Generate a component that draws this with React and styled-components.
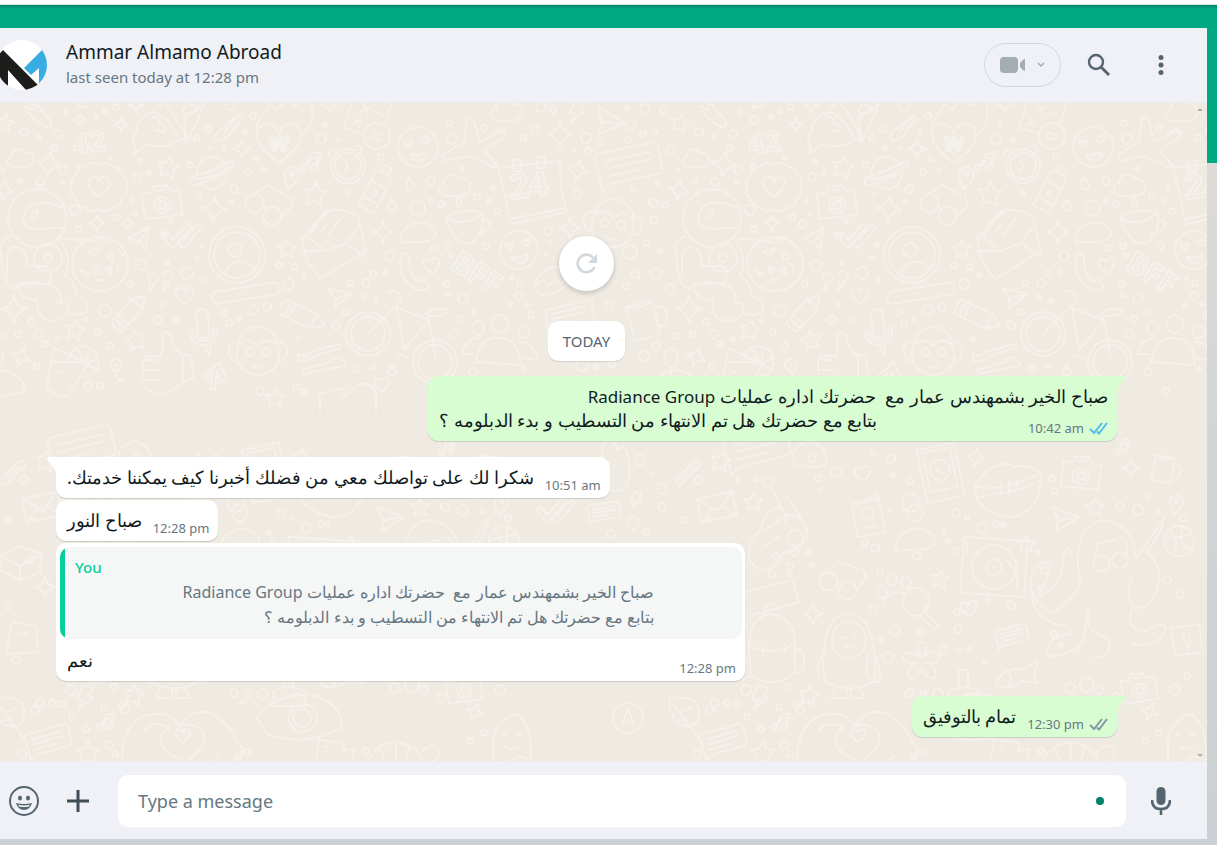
import styled, { createGlobalStyle, css } from "styled-components";

const GlobalStyle = createGlobalStyle`
    *, *::before, *::after {
        box-sizing: border-box;
    }

    body {
        margin: 0;
        color: #111b21;
        font-family: "Noto Sans", "Open Sans", sans-serif;
    }

    button, input {
        font: inherit;
    }
`;

const messages = [
    {
        id: 1,
        sent: true,
        tail: true,
        wide: true,
        lines: [{ text: "صباح الخير بشمهندس عمار مع  حضرتك اداره عمليات", latin: "Radiance Group" }],
        last: "بتابع مع حضرتك هل تم الانتهاء من التسطيب و بدء الدبلومه ؟",
        time: "10:42 am",
        status: "read",
        gap: 16,
    },
    {
        id: 2,
        tail: true,
        last: "شكرا لك على تواصلك معي من فضلك أخبرنا كيف يمكننا خدمتك.",
        time: "10:51 am",
        gap: 2,
    },
    { id: 3, last: "صباح النور", time: "12:28 pm", gap: 2 },
    {
        id: 4,
        wide: true,
        quote: {
            author: "You",
            lines: [
                { text: "صباح الخير بشمهندس عمار مع  حضرتك اداره عمليات", latin: "Radiance Group" },
                { text: "بتابع مع حضرتك هل تم الانتهاء من التسطيب و بدء الدبلومه ؟" },
            ],
        },
        last: "نعم",
        time: "12:28 pm",
        gap: 15,
    },
    { id: 5, sent: true, tail: true, last: "تمام بالتوفيق", time: "12:30 pm", status: "delivered", gap: 0 },
];

// Wallpaper doodles, one tile is 675px wide
const TILE = 675;

const star = "M0-10L3-3.6L10-3L5 2.2L6.4 9.4L0 6L-6.4 9.4L-5 2.2L-10-3L-3-3.6Z";
const sparkle = "M0-10Q1.5-1.5 10 0Q1.5 1.5 0 10Q-1.5 1.5-10 0Q-1.5-1.5 0-10Z";
const heart = "M0 8C-5 4-10 0-9-5C-7-10-1-9 0-4C1-9 7-10 9-5C10 0 5 4 0 8Z";
const bolt = "M-3-10L6-10L2-2L7-2L-4 11L-1 2L-7 2Z";
const camera = "M-19-11H-10L-7-17H7L10-11H19V14H-19ZM-8 2a8 8 0 1 0 16 0a8 8 0 1 0-16 0M-4 2a4 4 0 1 0 8 0a4 4 0 1 0-8 0M-4-13H4";
const cloud = "M-9 8C-16 6-14-2-9-2C-10-10 1-12 4-6C12-8 16 2 10 6C7 9-4 9-9 8Z";
const note = "M-6 8a3 3 0 1 1-1-3L-3-8L6-11L5 5a3 3 0 1 1-2-3L4-5L-3-3Z";
const pin = "M0 12C-3 6-8 2-7-4A7 7 0 0 1 7-4C8 2 3 6 0 12ZM-2-4a2 2 0 1 0 4 0a2 2 0 1 0-4 0";
const pencil = "M-22-8H12L24 0L12 8H-22Q-26 0-22-8ZM-17-8V8M-12-8V8M12-8V8";
const bubble = "M-30-12Q-30-17-25-17H30Q34-17 34-13V10Q34 15 30 15H-22L-30 22L-29 12ZM-20-8H24M-20-1H24M-20 7H10";
const letter = "M-18-12H18V12H-18ZM-18-12L0 4L18-12M-18 12L-5 0M18 12L5 0";
const openLetter = "M-33 18L-38-4L-14-32Q4-36 18-26L26 8L-20 36ZM-38 8L-14 8L6 0L26 14M-14 8L-32-6L-20-24L-10-32M6 0L18-16M-20-10L-14-18M-12-8L0-24";
const glasses = "M-22 5a10 10 0 1 0 20 0a10 10 0 1 0-20 0M2 5a10 10 0 1 0 20 0a10 10 0 1 0-20 0M-2 3Q0 0 2 3M-20 0L-12-20L12-22M21 0L24-18L16-24";
const plane = "M-13-6L11-10L0 10L-3 1Z M-3 1L11-10";
const tick = "M-16 1L-11-3L-4 4L8-16L12-13L-3 12ZM1 5L4 0L6 2L17-16L21-13L7 11Z";
const mug = "M-14-14H10V18H-14ZM-14-14Q-2-8 10-14M10-8Q22-8 20 4Q18 12 10 10";
const monkey =
    "M-20-3A20 20 0 0 1 20-3Q24 12 14 20Q0 30-14 20Q-24 12-20-3ZM-18-6Q-9-14 0-4Q9-14 18-6M-12 2a4 4 0 1 0 8 0a4 4 0 1 0-8 0M4 2a4 4 0 1 0 8 0a4 4 0 1 0-8 0M-6 15Q0 20 6 15M-22-8Q-32-6-28 6Q-26 12-20 10M22-8Q32-6 28 6Q26 12 20 10";
const smiley =
    "M-19 0a19 19 0 1 0 38 0a19 19 0 1 0-38 0M-9-1C-16-6-12-9-9-5C-5-10-2-6-9-1ZM8-3C1-8 5-12 8-8C12-12 15-8 8-3ZM-8 6Q0 9 8 5Q7 13 1 13Q-6 13-8 6Z";
const person = "M-7-22a7 8 0 1 0 14 0a7 8 0 1 0-14 0M-17 13C-20-12 18-14 18 6Q10 13 0 12T-17 13Z";

const doodles = [
    [star, 5, 123, 0.9, 10], [star, 83, 101, 0.8, 0], [star, 168, 167, 1.1, 10], [star, 315, 194, 1.2, 5],
    [star, 287, 249, 0.9, 0], [star, 75, 330, 1, 10], [star, 136, 340, 1, -10], [star, 46, 461, 1, 10],
    [star, 78, 502, 0.9, 0], [star, 265, 579, 0.9, 10], [star, 351, 544, 0.9, 0], [star, 420, 507, 0.9, 0],
    [star, 134, 695, 1, 10], [star, 88, 753, 1.2, 0], [star, 275, 398, 0.9, 0],
    [sparkle, 49, 164, 1.3, 10], [sparkle, 4, 190, 1, 10], [sparkle, 97, 223, 0.8, 0], [sparkle, 121, 125, 0.7, 0],
    [sparkle, 242, 149, 0.9, 0], [sparkle, 214, 209, 1.3, 5], [sparkle, 14, 309, 1.3, 0], [sparkle, 383, 232, 1.1, 0],
    [sparkle, 560, 134, 1.3, 0], [sparkle, 578, 170, 1.1, 10], [sparkle, 570, 228, 1.1, 0], [sparkle, 330, 104, 0.9, 0],
    [sparkle, 21, 357, 1, 20], [sparkle, 301, 457, 0.9, 10], [sparkle, 456, 468, 0.9, 0], [sparkle, 138, 614, 1, 0],
    [sparkle, 475, 712, 0.9, 20], [sparkle, 45, 587, 1, 0], [sparkle, 136, 105, 0.8, 0],
    [heart, 99, 187, 1.2, 0], [heart, 185, 296, 1, 0], [heart, 432, 266, 0.9, -10], [heart, 188, 474, 0.9, -10],
    [heart, 294, 609, 0.9, -10], [heart, 183, 736, 0.8, 0], [heart, 382, 385, 0.8, 0], [heart, 279, 144, 2.4, 0],
    [bolt, 577, 112, 1, 10], [bolt, 636, 500, 0.8, 10], [bolt, 85, 698, 1.2, 10],
    [camera, 162, 203, 1, -6], [camera, 406, 474, 1, 6], [camera, 464, 689, 0.9, -8],
    [cloud, 21, 159, 1, 0], [cloud, 507, 111, 1.2, 0], [cloud, 455, 186, 1.2, 0], [cloud, 190, 109, 0.5, 0],
    [note, 313, 162, 1, 10], [note, 449, 447, 0.8, 0], [note, 108, 722, 0.9, 10],
    [pin, 291, 178, 1, 10], [pin, 501, 505, 0.9, 10],
    [pencil, 130, 312, 0.9, -48], [pencil, 303, 316, 1, 25],
    [bubble, 627, 165, 1, -12], [bubble, 80, 448, 1, -14], [bubble, 47, 741, 0.7, -16], [bubble, 336, 636, 0.5, -14],
    [bubble, 603, 512, 0.5, -8],
    [letter, 42, 507, 1, -12], [openLetter, 340, 243, 1, 0],
    [glasses, 266, 206, 0.9, 35], [glasses, 165, 582, 0.9, 25], [glasses, 435, 558, 0.8, -10],
    [plane, 142, 240, 1, -20], [plane, 606, 124, 1.3, 40], [plane, 338, 299, 1, 20], [plane, 387, 521, 1.2, 30],
    [tick, 178, 237, 1, 10], [tick, 552, 512, 1, 10],
    [mug, 645, 318, 1.1, -14], [mug, 490, 468, 0.8, 10],
    [monkey, 613, 222, 1, 6], [monkey, 258, 350, 1, 0],
    [smiley, 418, 147, 1.05, -6], [smiley, 519, 250, 1, -6],
    [person, 418, 230, 1, 0], [person, 240, 537, 1.1, 0],
    // mitten, cookie and badge
    ["M-12-12Q-6-14 0-6L12 8Q16 16 8 15Q0 12-12-2M-14-6L-4-2M-10-12L-3-6", 38, 112, 1, 0],
    ["M-27 0Q-30-8-23-12Q-22-20-14-20Q-8-27 0-22Q8-27 14-20Q22-20 23-12Q30-8 27 0Q30 8 23 12Q22 20 14 20Q8 27 0 22Q-8 27-14 20Q-22 20-23 12Q-30 8-27 0Z", 99, 187, 1, 0],
    ["M-28 0a28 27 0 1 0 56 0a28 27 0 1 0-56 0M-12-12L0-16L-5-8ZM-20 6L-14 12L-10 10ZM-7 2l6 2l-3 6zM5 5l6-2l0 8zM12-2l6 4l0 6M-4 16h8M-3-27l10 4M20-12l4 4M8-10h5v5h-5z", 100, 264, 1, 0],
    // rocket
    ["M-26 28C-20 14-34 18-22 4C-26-2-20-6-12-12L-4-14C10-6 16 4 20 14C10 20-2 22-12 18ZM-8-8Q-2-12 0-2Q8-2 4 6L-4 4M-6-18L4-24Q18-8 26 12L20 14M4-24L18-42M24-8L44-22Q34 4 26 16Z", 160, 126, 1, 0],
    ["M-12 6Q-16 12-10 14Q-6 14 0 8L12-8Q10-12 6-10ZM-4 4L10-12M0 8L8-4", 229, 127, 1, 0],
    ["M-22 0C-24-14-12-18-10-28L-2-22L8-34L16-26L30-34Q40-14 24 2", 279, 132, 1, 0],
    // planet
    ["M-15 2A15 15 0 0 1 13-8M-12 10A15 15 0 0 0 15 2M-22 10C-24 2-12 4 16-10C26-16 22-4 8 2C-10 10-22 16-22 10ZM-16 6Q0 6 16-6", 212, 173, 1, 0],
    // clock and calculator
    ["M-17 0a17 17 0 1 0 34 0a17 17 0 1 0-34 0M-13 0a13 13 0 1 0 26 0a13 13 0 1 0-26 0M-3-6L0 0L-3 6M-19-10Q-20-16-12-16M8-20Q14-22 14-15", 348, 166, 1, 0],
    ["M-19-22H19V0M-19-22V16H0M-8-12l8 8m0-8l-8 8M6-8h9M-12 4l7 7m0-7l-7 7M2 14a13 13 0 1 0 26 0a13 13 0 1 0-26 0M10 12h9M10 17h9", 367, 118, 1, 18],
    ["M-9-14Q0-20 9-14V24H-9ZM-9-4H9M-9 14H9M-4-18V-24H4V-18M0 2Q4 7 0 9Q-4 7 0 2", 377, 188, 1, 28],
    ["M0-6Q8 4 0 6Q-8 4 0-6Z", 392, 205, 1, 0], ["M0-6Q8 4 0 6Q-8 4 0-6Z", 410, 184, 1, -10], ["M0-6Q6 4 0 6Q-6 4 0-6Z", 459, 201, 0.9, 0],
    // astronaut
    ["M-29 0a29 29 0 1 0 58 0a29 29 0 1 0-58 0M-13 4C-16-16 4-20 26-10M26 10C14 8-12 16-13 4M-6 0Q-4-8 0-8Q2-6-3 2ZM-26 18Q-40 22-36 36Q-34 64-28 68Q-20 74-18 66M-30 60V38Q-28 26-18 30Q-10 32-10 48H10Q18 54 12 66H-18Q-18 82 0 82Q0 104 18 103Q36 98 30 86Q24 84 20 84M24 24Q36 40 28 58Q38 62 40 78Q54 80 50 94Q42 98 32 96M24 20L62 24M-3 40a14 14 0 1 0 28 0a14 14 0 1 0-28 0M7 40a4 4 0 1 0 8 0a4 4 0 1 0-8 0M-18 66Q24 60 24 82V86", 37, 218, 1, 0],
    ["M-28 0a28 28 0 1 0 56 0a28 28 0 1 0-56 0M-23 0a23 23 0 1 0 46 0a23 23 0 1 0-46 0M-9-5a7 7 0 1 0 14 0a7 7 0 1 0-14 0M-12 18Q0-2 18 13", 237, 255, 1, 0],
    ["M-4-3a5 5 0 1 1 5 5Q2 8-4 10Q0 4-3 1M11-5a5 5 0 1 1 5 5Q18 6 11 9Q15 3 12 0", 152, 281, 1, 0],
    ["M-29-6H29Q34-6 34 0T29 6H-29Q-34 6-34 0T-29-6ZM-25 0h1M-17 0h1M-9 0h1M-1 0h1", 246, 293, 1, -9],
    // microphone
    ["M-6-10Q-6-17 0-17T6-10V6Q6 12 0 12T-6 6ZM-14 4Q-12 20 1 19Q14 18 14 2M-11 4Q-8 15 1 15Q10 14 11 2M-1 19L4 30L6 20", 203, 326, 1, -4],
    // thumb
    ["M-24 12V0Q-24-6-18-6H-6Q-2-22-6-26Q-2-34 4-26Q6-12 16-6V20L6 28Q-10 36-18 28Q-26 24-22 20M-22-2H-10M-24 8H-8M-24 18H-8M16-8L24-6L26 16L18 20", 167, 362, 1, 0],
    ["M-14 0L2-14L10 4L4 5L0-4L-2 14L-7 13L-4-4L-10 3Z", 217, 376, 1, 0],
    ["M-22 2Q-14 6-10 0L20-8L21-4L-6 4Q-14 12-22 8ZM-18 18L10 10Q14 2 22 8Q28 12 22 14L-16 22Z", 320, 352, 1, 0],
    // drink and hand
    ["M-10-24L24-8L4 24Q-4 26-18 16ZM-14-10H20M5-8a15 15 0 1 1 17 12M10-14L22-8L14-22M22-8L24-22M22-8L34-14M22-8L34-2M-6 0h2M2 0h1M-4 8h1", 64, 372, 1, 0],
    ["M0-6a6 6 0 1 0 .1 0M-1 0h2M0 6L3 16L-1 18M3 16L8 14", 116, 365, 1, 0],
    // bike
    ["M-22 0a22 22 0 1 0 44 0a22 22 0 1 0-44 0M-17 0a17 17 0 1 0 34 0a17 17 0 1 0-34 0M45 28a22 22 0 1 0 44 0a22 22 0 1 0-44 0M50 28a17 17 0 1 0 34 0a17 17 0 1 0-34 0M0 0L34-34Q30-46 20-42M29-26L61-14L36 16ZM61-14L68 26M58-20Q66-28 80-24Q80-18 60-18M30 20L40 24", 368, 334, 1, 0],
    // airplane
    ["M-3-28Q2-30 4-24L10-4L28-14Q38-16 34-8L14 4L28 20Q22 24 18 18L-2 10L-20 14Q-30 16-26 8L-6-4ZM26-14L30-18L36-14", 470, 146, 1, 0],
    ["M-31-20L31-27L32 2L38 24L-18 36L-24 8ZM-24 8L-8 6M-18 31L36 20M-16-28h8v11h-8zM8-31h8v11h-8z", 529, 188, 1, 0],
    ["M-20-8Q0-18 18-12Q20 10 6 18Q-10 22-20-8ZM-20-8Q-4 4 18-12M18-4Q28-6 24 2Q18 10 12 8", 465, 225, 1, 0],
    ["M-9-18L-2-16L-2-6Q0 6 6 10L14 8L18 16Q8 24-4 12Q-14 0-9-18Z", 411, 271, 1, 0],
    ["M-18 8Q-18-8 0-12Q12-14 14-4Q14 8-8 14Q-16 14-18 8ZM-16 4L-10 0L-6 5L0 0L6 3L14-4", 555, 280, 1.1, 0],
    ["M-24-10L22-20L26 20L-22 24ZM-18-6L16-14M-18-1L16-8M-16 4L0 1V14L-15 16Z", 570, 320, 1, 0],
    ["M-28-12a6 7 0 1 0 12 0a6 7 0 1 0-12 0M-8-16a8 9 0 1 0 16 0a8 9 0 1 0-16 0M18-8a6 6 0 1 0 12 0a6 6 0 1 0-12 0M-24 22Q-20-4 0-2T20 25ZM-38 14Q-34-2-20-2M-38 14L-26 14M20 2Q32 0 38 20L22 18", 500, 340, 1, 0],
    // phone with a logo
    ["M-19-24H19V30H-19ZM-14-20H14V20H-14ZM-10 0a10 10 0 1 0 20 0a10 10 0 1 0-20 0M-4-3Q-1 4 4 4M-1 25h2", 265, 470, 1, -12],
    // lips
    ["M-34 2Q-24-18-8-20Q-2-24 4-18Q20-22 32-12L30 8Q20 34-4 32Q-26 26-32 14ZM-32 2Q-8 8 32-12M-30 12L-8 8Q12 6 30-4M-8-2v10M0-4v14M8-6v10", 334, 485, 1, 0],
    ["M-14-14H14V20H-14ZM-14-9L12-20V-14M-6-2a6 6 0 1 0 12 0a6 6 0 1 0-12 0M-6 12H6", 193, 515, 1, -10],
    // record player
    ["M-32-28H32V28H-32ZM-22 0a22 22 0 1 0 44 0a22 22 0 1 0-44 0M-8 0a8 8 0 1 0 16 0a8 8 0 1 0-16 0M-1 0h2M12-8L24 6V20M-28-22v10", 319, 567, 1, 4],
    ["M-15 0a15 15 0 1 0 30 0a15 15 0 1 0-30 0M-10-11Q2 0-6 14M4-14Q-2 4 12 9M-15 0Q0-6 14-6", 504, 541, 1, 0],
    // octopus
    ["M-34-6Q-36-48-8-52Q20-50 24-14L44-42L52-54Q50-38 34-20Q56-4 42 24Q34 38 22 36Q12 24 20 6M-34-6Q-26 16-46 30L-60 42Q-86 26-80 0Q-70-14-60-8Q-66 8-72 24Q-50 18-48-18Q-44-30-40-16M-80 20Q-80 50-46 54L-40 62Q-62 62-66 80Q-60 90-40 78Q-24 70-28 60Q-24 50-24 34M-24 34Q-30 60-4 66Q2 84-18 86M20 36Q12 56 32 60Q50 48 54 56Q48 76 20 72", 437, 572, 1, 0],
    // bee
    ["M-30 32Q-28 8-6 4Q4-10 16-6Q30 0 28 16Q18 32 4 30Q0 46-14 48Q-30 46-30 32ZM-18 6Q-12-14 0-14Q10-10 6 2M2-14Q-6-34-10-36M22-4Q14-20 4-28M-14 24L0 14M8 16a8 8 0 1 0 16 0a8 8 0 1 0-16 0", 104, 522, 1, 0],
    ["M-20 4a5 6 0 1 0 10 0a5 6 0 1 0-10 0M-10-8a5 6 0 1 0 10 0a5 6 0 1 0-10 0M4-6a5 6 0 1 0 10 0a5 6 0 1 0-10 0M-14 14Q-6 0 8 6M6 14a13 14 0 1 0 26 0a13 14 0 1 0-26 0M28 24L42 38L38 42L24 28", 222, 588, 1, 0],
    // backpack
    ["M-26 0Q-26-28-6-32Q18-30 20-4V26Q0 44-24 30ZM-26 0Q0 12 20-4M-30-54L18-66L24-44L-26-30M-12-32Q-6-50 4-36M-28 14Q-36 18-32 34L-24 30M20 4Q32 0 28 26L20 26M-12 0v8M10-2v8", 100, 646, 1, 0],
    // penguin
    ["M-24 30Q-30-8-16-32Q0-46 16-30Q28-12 26 28Q4 44-24 30ZM-17-12a17 18 0 1 0 34 0a17 18 0 1 0-34 0M-8-14q2-3 4 0M4-14q2-3 4 0M-4-6Q0-2 4-6M-24-4Q-36 20-28 26M24 2Q34 18 30 30L22 30Q14 16 20 2M-14 36L-18 46H-2V38M2 38V46H16L10 34", 174, 652, 1, 0],
    ["M0-4Q-10-18 0-20Q10-18 0-4Q14-16 18-6Q16 4 4 0Q18 8 12 16Q4 18 0 4Q-4 20-12 16Q-18 8-4 0Q-18 4-20-6Q-14-14 0-4Z", 247, 662, 1, 0],
    ["M-20 10Q-16-8 8-6L22-14L18 2L22 8L6 6Q-6 16-20 10ZM-8-4Q-2 4-8 12", 341, 675, 1, 0],
    ["M-16 14V0Q0-10 16 0V14ZM-5-6V-22H4V-6M-16 4Q-8 10 0 4T16 4", 289, 692, 1, 0],
    // leaf and compass
    ["M-14-16Q24-20 14 8Q6 16-4 10Q-16-2-14-16ZM-14-16L20 30M-2-2L8-6M4 6L-4 6", 8, 714, 1, 0],
    ["M-15 0a15 15 0 1 0 30 0a15 15 0 1 0-30 0M0-9L6 6L0 2L-6 6Z", 628, 718, 1, 0],
    // heart shaped hands
    ["M-62 25L-60 6Q-54-24-28-26Q-12-28-4-14Q10-34 30-26Q50-12 54 2Q64 10 54 20Q46 30 36 22M-40-8Q-30-22-14-12Q-24-10-22 4Q-16 16 0 20Q-4 30-20 28L-40 24M-4-14Q12-18 20-8Q26 4 12 14Q2 22 8 28Q24 28 36 16", 183, 740, 1, 0],
    ["M-40 0Q-20-28 20-22Q48-10 44 10Q10 30-30 16ZM-8 0a14 14 0 1 0 28 0a14 14 0 1 0-28 0M-4 0a9 9 0 1 0 18 0a9 9 0 1 0-18 0", 297, 718, 1, 0],
    ["M-18-12H8V-4L18-8V14L8 8V14H-18ZM-12-6h4", 335, 754, 1, 8],
    ["M-30 14Q-24-10 0-12Q26-8 28 14M-16-6L-8 14M0-12V12M14-8L8 14M26-2Q36-14 44-4Q44 8 28 10", 396, 754, 1, 0],
    ["M-12 24V0Q-4-22 12-24Q28-10 26 22L14 18L4 24ZM-4-6l5 4m0-4l-5 4M10-6l5 4m0-4l-5 4M0 8Q6 14 14 8", 505, 738, 1, 0],
    ["M-16 14L-10-18L14-14L16 12ZM-6-8Q0-4 6-8", 22, 640, 1, 0], ["M-14-14H14V14H-14ZM-3-6V2Q0 6 3 2V-6M0 6v4", 512, 640, 1, -8],
    ["M-20-4L0-14L22-6L20 12L0 20L-20 10ZM-20-4L0 6L22-6M0 6V20", 20, 560, 1, 0],
    ["M-30 20V2L-8-4V6L10-8Q24-10 26 2V20", 350, 392, 1, 0], ["M-18 16Q-24-12 0-14Q26-10 24 8Z", 0, 384, 1, 0],
    ["M-10 6Q-14 12-8 13L12-6Q12-13 6-11Z M-5 6L6-5", 13, 472, 1, 0],
    ["M-8-22Q0-30 6-16L12-20Q22 0 14 22Q-2 30-12 14L-4 10Q-14-4-8-22Z", 612, 466, 1, 0],
    ["M-16 8Q-20-10 0-14Q18-8 16 8Q8 16-16 8Z", 135, 455, 1, 0], ["M-8 0a7 9 0 1 0 14 0a7 9 0 1 0-14 0M-1 9V18", 672, 358, 1, 0],
];

const rings = [
    [24, 132, 4], [39, 137, 2], [58, 134, 4], [65, 112, 2], [80, 120, 4], [96, 117, 2], [105, 111, 2], [116, 107, 3],
    [55, 148, 3], [63, 170, 4], [40, 182, 4], [20, 181, 2], [62, 182, 2], [3, 170, 2], [78, 166, 2],
    [110, 158, 2], [140, 161, 2], [137, 177, 4], [149, 173, 2], [75, 210, 5], [117, 217, 3], [132, 200, 2], [135, 213, 2],
    [128, 224, 4], [79, 229, 3], [171, 221, 2], [163, 235, 3], [141, 265, 5], [167, 263, 2], [187, 273, 6], [197, 258, 2],
    [202, 245, 2], [130, 284, 3], [163, 305, 2], [105, 311, 6], [157, 320, 4], [176, 320, 2], [203, 280, 2], [199, 195, 2],
    [231, 202, 2], [234, 189, 4], [190, 165, 3], [208, 129, 3], [197, 138, 3], [210, 148, 2], [224, 148, 1], [245, 132, 2],
    [253, 116, 3], [248, 172, 3], [264, 170, 2], [256, 159, 2], [229, 105, 5], [321, 139, 5], [325, 125, 2], [338, 140, 2],
    [381, 157, 3], [348, 193, 2], [389, 256, 5], [279, 265, 3], [295, 267, 3], [304, 275, 2], [289, 284, 5], [350, 283, 3],
    [366, 283, 4], [373, 274, 3], [385, 272, 2], [364, 297, 2], [376, 301, 2], [346, 312, 3], [336, 325, 4], [253, 310, 5],
    [267, 307, 4], [224, 313, 3], [239, 319, 2], [229, 323, 3], [298, 339, 2], [31, 322, 3], [18, 334, 3], [39, 334, 4],
    [45, 344, 3], [58, 339, 2], [86, 320, 2], [98, 332, 3], [110, 346, 3], [37, 366, 3], [88, 386, 4], [100, 386, 3],
    [260, 391, 4], [296, 387, 3], [304, 392, 3], [357, 369, 3], [373, 367, 2], [392, 371, 4], [2, 336, 3],
    [449, 123, 3], [452, 139, 5], [484, 128, 3], [523, 138, 3], [535, 129, 4], [541, 107, 5], [553, 110, 3], [586, 138, 5],
    [600, 142, 3], [574, 150, 2], [588, 151, 3], [577, 194, 4], [631, 125, 5], [643, 134, 3], [655, 132, 2], [628, 140, 3],
    [645, 109, 5], [663, 110, 3], [627, 108, 2], [671, 150, 4], [657, 183, 2], [633, 189, 2], [653, 203, 4], [665, 205, 3],
    [654, 220, 4], [647, 243, 3], [660, 251, 2], [630, 252, 7], [462, 169, 2], [431, 181, 4], [431, 201, 2], [441, 204, 3],
    [477, 197, 3], [489, 201, 2], [493, 188, 2], [497, 211, 3], [548, 231, 4], [550, 243, 2], [546, 254, 1], [486, 246, 3],
    [448, 246, 3], [434, 248, 3], [451, 255, 2], [447, 284, 3], [463, 299, 5], [448, 295, 2], [512, 278, 2], [520, 283, 3],
    [519, 296, 4], [510, 305, 2], [527, 304, 2], [531, 315, 3], [474, 312, 2], [459, 319, 3], [454, 334, 4], [635, 274, 4],
    [656, 273, 5], [626, 286, 3], [670, 289, 5], [609, 305, 4], [640, 280, 1], [656, 346, 4], [644, 356, 5], [473, 372, 4],
    [524, 369, 2], [491, 391, 3], [582, 365, 6], [596, 367, 2], [612, 364, 3], [392, 367, 2],
    [640, 460, 5], [652, 474, 2], [661, 489, 5], [662, 507, 4], [633, 523, 6], [646, 532, 3], [611, 534, 4], [93, 482, 5],
    [81, 479, 2], [63, 480, 2], [137, 458, 4], [161, 472, 5], [143, 478, 3], [145, 490, 2], [216, 459, 4], [198, 453, 2],
    [218, 475, 2], [235, 481, 3], [236, 503, 9], [215, 510, 2], [281, 513, 4], [292, 518, 2], [307, 528, 5], [321, 524, 3],
    [328, 525, 2], [273, 541, 2], [280, 551, 3], [242, 556, 4], [269, 533, 2], [370, 570, 4], [363, 553, 2], [365, 588, 2],
    [380, 491, 3], [377, 479, 3], [445, 507, 4], [463, 510, 5], [473, 497, 2], [508, 518, 3], [483, 511, 2], [379, 634, 3],
    [386, 645, 2], [402, 650, 3], [220, 631, 5], [246, 632, 3], [283, 629, 4], [282, 612, 3], [198, 609, 4], [213, 657, 5],
    [205, 640, 2], [250, 608, 2], [336, 605, 4], [313, 600, 2], [268, 650, 4], [283, 651, 2], [294, 649, 2], [310, 662, 2],
    [122, 705, 3], [114, 687, 3], [40, 703, 4], [52, 703, 3], [62, 704, 3], [35, 710, 4], [72, 717, 3],
    [86, 729, 3], [104, 707, 3], [125, 709, 4], [109, 745, 4], [115, 754, 3], [22, 754, 4], [71, 690, 5], [234, 693, 4],
    [248, 694, 3], [263, 694, 5], [243, 702, 2], [238, 757, 3], [247, 752, 3], [366, 751, 3], [395, 688, 5], [412, 685, 7],
    [424, 690, 4], [441, 697, 4], [470, 741, 3], [484, 733, 3], [500, 690, 5], [512, 676, 3], [505, 594, 4], [492, 580, 4],
    [101, 556, 3], [120, 552, 4], [133, 552, 2], [115, 566, 3], [137, 565, 2], [97, 574, 3], [115, 574, 2], [200, 548, 4],
    [205, 571, 3], [190, 543, 3], [30, 560, 3], [16, 660, 4], [8, 606, 3], [24, 480, 4], [8, 520, 3], [34, 520, 2],
];

const Tile = () => (
    <g id="doodle-tile">
        {doodles.map(([d, x, y, scale, angle], i) => (
            <path key={i} d={d} transform={`translate(${x} ${y}) rotate(${angle}) scale(${scale})`} vectorEffect="non-scaling-stroke" />
        ))}
        {rings.map(([x, y, r], i) => (
            <circle key={i} cx={x} cy={y} r={r} />
        ))}
        <text x="73" y="152" fontSize="28" transform="rotate(-8 92 142)">42</text>
        <text x="509" y="197" fontSize="34" transform="rotate(-6 532 185)">24</text>
        <text x="448" y="286" fontSize="30" transform="rotate(32 480 278)">BFF</text>
        <text x="269" y="151" fontSize="20">W</text>
    </g>
);

const Doodles = () => (
    <Wallpaper aria-hidden="true">
        <g transform="translate(0 -103)">
            <Tile />
            <use href="#doodle-tile" x={TILE} />
            <use href="#doodle-tile" x={TILE * 2} />
            <use href="#doodle-tile" x={-TILE} />
        </g>
    </Wallpaper>
);

const Avatar = () => (
    <svg width="47" height="50" viewBox="3 0 47 50" role="img" aria-label="Profile photo">
        <defs>
            <clipPath id="avatar-clip">
                <circle cx="25" cy="25" r="25" />
            </clipPath>
        </defs>
        <g clipPath="url(#avatar-clip)">
            <rect width="50" height="50" fill="#fff" />
            <path d="M27 28L46 9L52 12V36L42 44V28L34 35Z" fill="#38ade3" />
            <path d="M6 10L41 45L36 50H29L11 30V46L0 40V16Z" fill="#1d1d1b" />
        </g>
    </svg>
);

const VideoIcon = () => (
    <svg width="25" height="16" viewBox="0 0 25 16" fill="#a4adb4" aria-hidden="true">
        <rect width="18" height="16" rx="4" />
        <path d="M20 6L24 2Q25 1.500 25 3V13Q25 14.500 24 14L20 10Z" />
    </svg>
);

const ChevronIcon = () => (
    <svg width="8" height="6" viewBox="0 0 8 6" fill="none" stroke="#a4adb4" strokeWidth="1.500" aria-hidden="true">
        <path d="M1 1L4 4L7 1" />
    </svg>
);

const SearchIcon = () => (
    <svg width="24" height="24" viewBox="0 0 24 24" fill="none" stroke="#54656f" aria-hidden="true">
        <circle cx="9" cy="9" r="7" strokeWidth="2.400" />
        <path d="M14 14L22 22" strokeWidth="3" />
    </svg>
);

const MenuIcon = () => (
    <svg width="6" height="20" viewBox="0 0 6 20" fill="#54656f" aria-hidden="true">
        <circle cx="3" cy="2.500" r="2.500" />
        <circle cx="3" cy="10" r="2.500" />
        <circle cx="3" cy="17.500" r="2.500" />
    </svg>
);

const RefreshIcon = () => (
    <svg width="22" height="22" viewBox="0 0 22 22" aria-hidden="true">
        <path d="M18.500 14A8.800 8.800 0 1 1 17 4.500" fill="none" stroke="#d1d7db" strokeWidth="2.600" />
        <path d="M21 1V10H12Z" fill="#d1d7db" />
    </svg>
);

const SmileIcon = () => (
    <svg width="30" height="30" viewBox="0 0 30 30" aria-hidden="true">
        <circle cx="15" cy="15" r="14" fill="none" stroke="#54656f" strokeWidth="2" />
        <ellipse cx="11" cy="12" rx="2" ry="2.500" fill="#54656f" />
        <ellipse cx="19" cy="12" rx="2" ry="2.500" fill="#54656f" />
        <path d="M7 17Q15 19 23 17Q21 24 15 24T7 17Z" fill="#54656f" />
        <path d="M9 18.800Q15 20.200 21 18.800L20 20.400Q15 21.800 10 20.400Z" fill="#f0f2f5" />
    </svg>
);

const PlusIcon = () => (
    <svg width="22" height="22" viewBox="0 0 22 22" stroke="#3f4e57" strokeWidth="3" aria-hidden="true">
        <path d="M11 0V22M0 11H22" />
    </svg>
);

const MicIcon = () => (
    <svg width="20" height="28" viewBox="0 0 20 28" aria-hidden="true">
        <rect x="5.500" width="9" height="18" rx="4.500" fill="#54656f" />
        <path d="M1 13Q1 22 10 22T19 13M10 22V28" fill="none" stroke="#54656f" strokeWidth="2.600" />
    </svg>
);

const CheckIcon = ({ color }) => (
    <svg width="19" height="13" viewBox="0 0 19 13" fill="none" stroke={color} strokeWidth="2" aria-hidden="true">
        <path d="M1 7L5 11L13 1M8 9.500L10 11.500L18 1" />
    </svg>
);

const TextLine = ({ line }) => (
    <Line dir="rtl">
        {line.text}
        {line.latin && <Latin> {line.latin}</Latin>}
    </Line>
);

const Message = ({ message }) => {
    const { sent, tail, wide, lines = [], quote, last, time, status, gap } = message;
    return (
        <Bubble $sent={sent} $tail={tail} $wide={wide} $gap={gap}>
            {quote && (
                <Quote>
                    <QuoteAuthor>{quote.author}</QuoteAuthor>
                    <QuoteText>
                        {quote.lines.map((line) => (
                            <TextLine key={line.text} line={line} />
                        ))}
                    </QuoteText>
                </Quote>
            )}
            {lines.map((line) => (
                <TextLine key={line.text} line={line} />
            ))}
            <LastRow>
                <Line dir="rtl">{last}</Line>
                <Meta>
                    {time}
                    {status && <CheckIcon color={status === "read" ? "#53bdeb" : "#8696a0"} />}
                </Meta>
            </LastRow>
        </Bubble>
    );
};

const App = () => {
    return (
        <Page>
            <GlobalStyle />
            <TopStrip />
            <Backdrop>
                <Panel>
                    <Header>
                        <Avatar />
                        <Contact>
                            <h1>Ammar Almamo Abroad</h1>
                            <p>last seen today at 12:28 pm</p>
                        </Contact>
                        <CallButton type="button" aria-label="Video call">
                            <VideoIcon />
                            <ChevronIcon />
                        </CallButton>
                        <IconButton type="button" aria-label="Search"><SearchIcon /></IconButton>
                        <IconButton type="button" aria-label="Menu"><MenuIcon /></IconButton>
                    </Header>

                    <Chat>
                        <Doodles />
                        <Messages>
                            <RefreshButton type="button" aria-label="Load older messages"><RefreshIcon /></RefreshButton>
                            <DayLabel>TODAY</DayLabel>
                            {messages.map((message) => (
                                <Message key={message.id} message={message} />
                            ))}
                        </Messages>
                        <ScrollRail aria-hidden="true">
                            <Arrow />
                            <Arrow $down />
                        </ScrollRail>
                    </Chat>

                    <Footer>
                        <IconButton type="button" aria-label="Emoji"><SmileIcon /></IconButton>
                        <IconButton type="button" aria-label="Attach"><PlusIcon /></IconButton>
                        <Composer>
                            <input type="text" placeholder="Type a message" aria-label="Type a message" />
                            <Dot />
                        </Composer>
                        <IconButton type="button" aria-label="Voice message"><MicIcon /></IconButton>
                    </Footer>
                </Panel>
            </Backdrop>
        </Page>
    );
};

const Page = styled.div`
    display: flex;
    flex-direction: column;
    min-height: 100vh;
`;

const TopStrip = styled.div`
    height: 5px;
    background: #fff;
    border-bottom: 1px solid #dfe3e3;
`;

const Backdrop = styled.div`
    display: flex;
    flex: 1;
    padding: 23px 10px 6px 0;
    background:
        linear-gradient(rgba(0, 60, 45, 0.3), transparent) 0 0 / 100% 4px no-repeat,
        linear-gradient(#00a884, #00a884) 0 0 / 100% 158px no-repeat,
        linear-gradient(#dddbd6 158px, #d3d6d7 400px, #cad0d3);
`;

const Panel = styled.main`
    display: flex;
    flex: 1;
    flex-direction: column;
    min-width: 0;
    background: #f0f2f5;
`;

const Header = styled.header`
    display: flex;
    align-items: center;
    height: 75px;
    padding-right: 24px;
    border-bottom: 1px solid #e6eaed;
    background: #f0f1f6;
`;

const Contact = styled.div`
    flex: 1;
    margin-left: 19px;

    h1 {
        margin: 0;
        font-size: 19px;
        font-weight: 400;
        line-height: 26px;
    }

    p {
        margin: 0;
        padding-bottom: 2px;
        color: #667781;
        font-size: 15px;
        line-height: 24px;
    }
`;

const plainButton = css`
    display: flex;
    align-items: center;
    justify-content: center;
    padding: 0;
    border: 0;
    background: none;
    cursor: pointer;
`;

const IconButton = styled.button`
    ${plainButton}
    width: 44px;
    height: 44px;
`;

const CallButton = styled.button`
    ${plainButton}
    gap: 12px;
    width: 77px;
    height: 44px;
    border: 1px solid #d3d8dc;
    border-radius: 22px;

    & + ${IconButton} {
        margin: 0 18px 0 16px;
    }
`;

const Chat = styled.section`
    position: relative;
    display: flex;
    flex: 1;
    background: #efeae2;
`;

const Wallpaper = styled.svg`
    position: absolute;
    inset: 0;
    width: 100%;
    height: 100%;
    fill: none;
    stroke: #f5f1ea;
    stroke-width: 2px;
    stroke-linejoin: round;
    stroke-linecap: round;

    text {
        font-family: "Open Sans", sans-serif;
        font-weight: 700;
    }
`;

const Messages = styled.div`
    position: relative;
    display: flex;
    flex: 1;
    flex-direction: column;
    justify-content: flex-end;
    min-width: 0;
    padding: 24px 77px 25px 56px;
`;

const RefreshButton = styled.button`
    ${plainButton}
    align-self: center;
    width: 55px;
    height: 55px;
    margin-bottom: 30px;
    border-radius: 50%;
    background: #fff;
    box-shadow: 0 2px 5px rgba(11, 20, 26, 0.2);
`;

const DayLabel = styled.div`
    align-self: center;
    margin-bottom: 15px;
    padding: 0 15px;
    border-radius: 10px;
    background: #fff;
    box-shadow: 0 1px 1px rgba(11, 20, 26, 0.13);
    color: #54656f;
    font-size: 15px;
    line-height: 40px;
`;

const Bubble = styled.article`
    position: relative;
    align-self: ${({ $sent }) => ($sent ? "flex-end" : "flex-start")};
    width: ${({ $wide }) => ($wide ? "689px" : "auto")};
    max-width: 100%;
    margin-bottom: ${({ $gap }) => $gap}px;
    padding: 8px 9px 9px 11px;
    border-radius: 10px;
    background: ${({ $sent }) => ($sent ? "#d9fdd3" : "#fff")};
    box-shadow: 0 1px 1px rgba(11, 20, 26, 0.15);

    ${({ $tail, $sent }) => $tail && css`
        border-top-${$sent ? "right" : "left"}-radius: 0;

        &::before {
            content: "";
            position: absolute;
            top: 0;
            ${$sent ? "right" : "left"}: -9px;
            width: 9px;
            height: 14px;
            background: inherit;
            clip-path: ${$sent ? "polygon(0 0, 90% 0, 100% 14%, 0 100%)" : "polygon(100% 0, 10% 0, 0 14%, 100% 100%)"};
        }
    `}
`;

const Line = styled.div`
    height: 24px;
    font-size: 18px;
    line-height: 24px;
    white-space: pre;
`;

const Latin = styled.span`
    font-size: 17px;
`;

const LastRow = styled.div`
    display: flex;
    align-items: flex-start;
    justify-content: space-between;
    gap: 11px;
`;

const Meta = styled.span`
    display: flex;
    flex: none;
    align-items: center;
    gap: 5px;
    margin: 11px 0 -5px;
    color: #667781;
    font-size: 13px;
    line-height: 18px;
`;

const Quote = styled.blockquote`
    margin: -4px -6px 9px -7px;
    padding: 7px 16px 9px 15px;
    border-radius: 10px;
    background: linear-gradient(to right, #06cf9c 5px, #f5f6f6 5px);
    color: #667781;
`;

const QuoteAuthor = styled.div`
    color: #06cf9c;
    font-size: 15px;
    font-weight: 500;
    line-height: 26px;
`;

const QuoteText = styled.div`
    padding-right: 72px;

    ${Line} {
        height: 25px;
        font-size: 16px;
        line-height: 25px;
    }

    ${Latin} {
        font-size: 16px;
    }
`;

const ScrollRail = styled.div`
    position: relative;
    display: flex;
    flex-direction: column;
    justify-content: space-between;
    width: 13px;
    padding: 5px 3px;
`;

const Arrow = styled.span`
    width: 6px;
    border: 3px solid transparent;
    border-top: ${({ $down }) => ($down ? "3px solid #b5b1ab" : "0")};
    border-bottom: ${({ $down }) => ($down ? "0" : "3px solid #b5b1ab")};
`;

const Footer = styled.footer`
    display: flex;
    align-items: center;
    min-height: 77px;
    padding: 0 24px 0 2px;
    background: #f0f1f6;

    ${IconButton} + ${IconButton} {
        margin: 0 18px 0 10px;
    }
`;

const Composer = styled.div`
    display: flex;
    flex: 1;
    align-items: center;
    height: 52px;
    margin-right: 13px;
    padding: 0 22px 0 20px;
    border-radius: 10px;
    background: #fff;

    input {
        flex: 1;
        min-width: 0;
        padding: 0;
        border: 0;
        outline: 0;
        background: none;
        color: #3b4a54;
        font-size: 18px;
    }

    input::placeholder {
        color: #667781;
        opacity: 1;
    }
`;

const Dot = styled.span`
    width: 8px;
    height: 8px;
    border-radius: 50%;
    background: #008069;
`;

export default App;
